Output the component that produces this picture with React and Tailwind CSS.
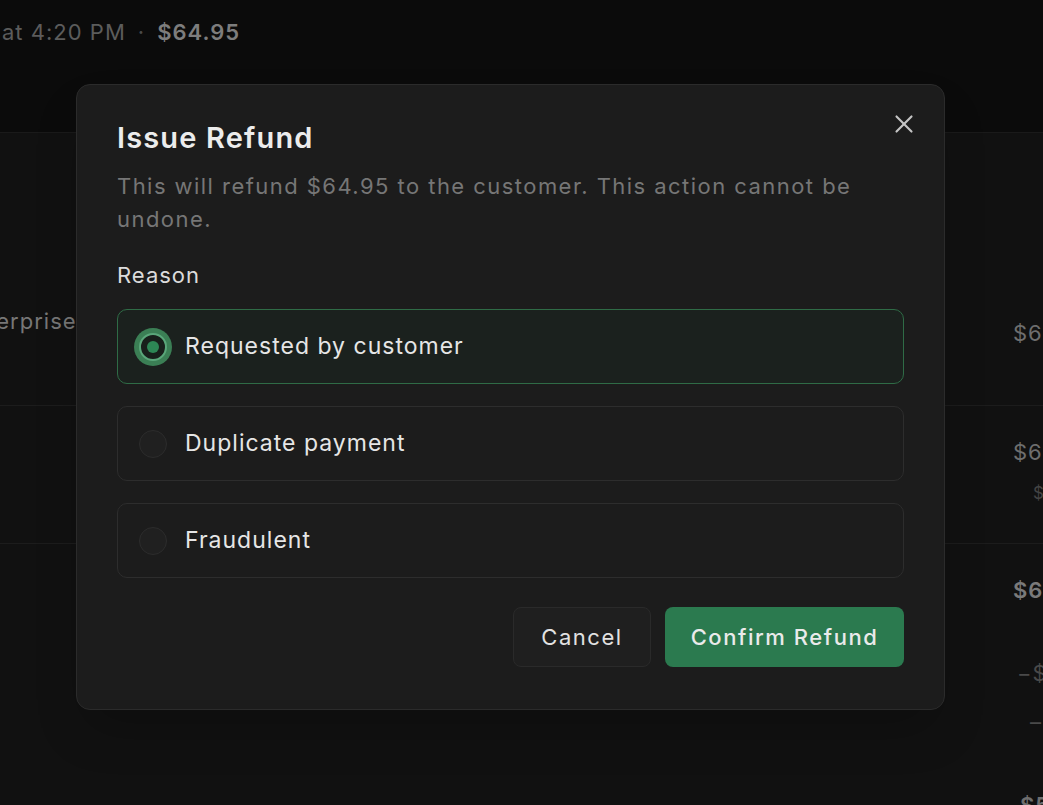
import { useState } from 'react';
import { X } from 'lucide-react';
import { clsx } from 'clsx';

const REASONS = [
  { key: 'requested_by_customer', label: 'Requested by customer' },
  { key: 'duplicate', label: 'Duplicate payment' },
  { key: 'fraudulent', label: 'Fraudulent' },
];

const FONT = { fontFamily: 'Inter, "Open Sans", sans-serif' };

function Backdrop() {
  return (
    <div className="flex flex-col h-full">
      {/* Header strip */}
      <div className="h-[132px] shrink-0 bg-[#0b0b0b] pt-[16px] pl-[2px] flex items-start gap-[12px] text-[22px] whitespace-nowrap">
        <span className="text-[#5c5c5c]">at 4:20 PM</span>
        <span className="text-[#4a4a4a]">·</span>
        <span className="font-semibold text-[#7d7d7d]">$64.95</span>
      </div>

      {/* Table rows behind the dialog */}
      <div className="flex-1 bg-[#111111] border-t border-[#1a1a1a] text-[22px] whitespace-nowrap">
        <div className="h-[273px] grid grid-cols-[1013px_1fr] border-b border-[#1c1c1c]">
          <div className="pt-[172px] -ml-[40px] text-[#777]">Enterprise</div>
          <div className="pt-[184px] text-[#6e6e6e]">$64.95</div>
        </div>
        <div className="h-[138px] grid grid-cols-[1013px_1fr] border-b border-[#1c1c1c]">
          <div />
          <div className="flex flex-col pt-[30px]">
            <span className="text-[#6e6e6e]">$64.95</span>
            <span className="ml-[20px] mt-[12px] text-[17px] text-[#444]">$0.00</span>
          </div>
        </div>
        <div className="grid grid-cols-[1013px_1fr]">
          <div />
          <div className="flex flex-col pt-[30px]">
            <span className="font-semibold text-[#7a7a7a]">$64.95</span>
            <span className="ml-[4px] mt-[50px] text-[#4a4a4a]">−$64.95</span>
            <span className="ml-[17px] mt-[16px] text-[#4a4a4a]">–</span>
            <span className="ml-[7px] mt-[50px] font-semibold text-[#6e6e6e]">$58.40</span>
          </div>
        </div>
      </div>
    </div>
  );
}

function Radio({ checked }) {
  if (checked) {
    return (
      <span className="w-[28px] h-[28px] shrink-0 rounded-full border-[2px] border-[#5aa77a] ring-[5px] ring-[#3b7f55] bg-[#18201b] flex items-center justify-center">
        <span className="w-[12px] h-[12px] rounded-full bg-[#2d8755]" />
      </span>
    );
  }
  return <span className="w-[28px] h-[28px] shrink-0 rounded-full border border-[#2c2c2c] bg-[#202020]" />;
}

function RefundDialog() {
  const [reason, setReason] = useState('requested_by_customer');

  return (
    <div className="absolute left-[76px] top-[84px] w-[869px] h-[626px] rounded-[14px] bg-[#1c1c1c] border border-[#2b2b2b] shadow-2xl px-[40px] pt-[35px]">
      <button className="absolute right-[25px] top-[24px] text-[#c4c4c4]">
        <X className="w-[30px] h-[30px]" strokeWidth={1.7} />
      </button>

      <h2 className="text-[29px] leading-[36px] font-semibold text-[#ececec] tracking-[0.04em]">Issue Refund</h2>
      <p className="mt-[14px] text-[22px] leading-[33px] text-[#767676] tracking-[0.066em]">
        This will refund $64.95 to the customer. This action cannot be undone.
      </p>

      <div className="mt-[24px] text-[22px] leading-[30px] text-[#dcdcdc]">Reason</div>

      <div className="mt-[19px] flex flex-col gap-[22px]">
        {REASONS.map((r) => {
          const checked = reason === r.key;
          return (
            <button
              key={r.key}
              onClick={() => setReason(r.key)}
              className={clsx(
                'h-[75px] w-full rounded-[10px] border flex items-center gap-[18px] pl-[21px] text-left',
                checked ? 'border-[#2f6b46] bg-[#1b211e]' : 'border-[#2d2d2d] bg-[#1c1c1c]'
              )}
            >
              <Radio checked={checked} />
              <span className="text-[23px] text-[#e6e6e6]">{r.label}</span>
            </button>
          );
        })}
      </div>

      <div className="mt-[29px] flex justify-end gap-[14px]">
        <button className="h-[60px] w-[138px] rounded-[8px] border border-[#2a2a2a] bg-[#1f1f1f] text-[22px] text-[#e2e2e2] tracking-[0.07em]">
          Cancel
        </button>
        <button className="h-[60px] w-[239px] rounded-[8px] bg-[#2b7a4f] text-[22px] font-medium text-[#eaeaea] tracking-[0.07em]">
          Confirm Refund
        </button>
      </div>
    </div>
  );
}

export default function App() {
  return (
    <div className="relative w-[1043px] h-[805px] overflow-hidden bg-[#0b0b0b] tracking-[0.063em]" style={FONT}>
      <Backdrop />
      <RefundDialog />
    </div>
  );
}
